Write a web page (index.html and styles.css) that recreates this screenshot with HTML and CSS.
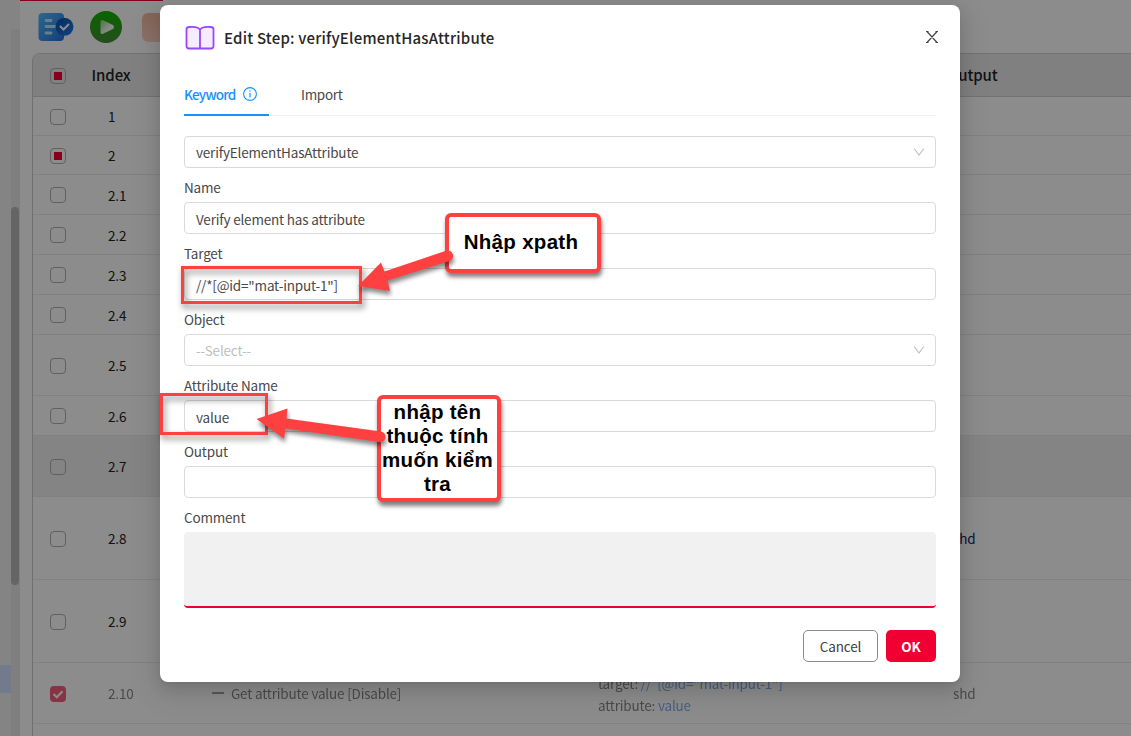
FILE: index.html
```html
<!DOCTYPE html>
<html lang="vi">
<head>
<meta charset="utf-8">
<title>Edit Step</title>
<link rel="stylesheet" href="styles.css">
</head>
<body>
<div class="app">
  <aside class="side"><div class="side-item"></div><div class="track"><div class="thumb"></div></div></aside>
  <main class="main">
    <div class="progress"></div>
    <div class="toolbar">
      <svg class="tool-check" width="36" height="30" viewBox="0 0 36 30">
        <defs>
          <linearGradient id="doc" x1="0" y1="0" x2="1" y2="1"><stop offset="0" stop-color="#50bcff"/><stop offset="1" stop-color="#2b6fe0"/></linearGradient>
          <linearGradient id="badge" x1="0" y1="0" x2="1" y2="1"><stop offset="0" stop-color="#0b4ba8"/><stop offset="1" stop-color="#1a80f0"/></linearGradient>
        </defs>
        <rect x=".5" y="1" width="25.5" height="28" rx="4" fill="url(#doc)"/>
        <path d="M8 8.500h5M8 14.500h9M8 21h5" stroke="#bfe6ff" stroke-width="2.800" stroke-linecap="round"/>
        <circle cx="26.500" cy="14.800" r="9" fill="url(#badge)"/>
        <path d="M22.500 14.500l3 3 5-5" fill="none" stroke="#fff" stroke-width="2" stroke-linecap="round"/>
      </svg>
      <svg class="tool-run" width="32" height="32" viewBox="0 0 32 32">
        <defs>
          <linearGradient id="run" x1="0" y1="0" x2="0" y2="1"><stop offset="0" stop-color="#11b800"/><stop offset="1" stop-color="#468c35"/></linearGradient>
          <linearGradient id="tri" x1="0" y1="0" x2="1" y2="1"><stop offset="0" stop-color="#8fd583"/><stop offset=".6" stop-color="#f4faf2"/></linearGradient>
        </defs>
        <circle cx="16" cy="16" r="16" fill="url(#run)"/>
        <path d="M10.500 11Q10.500 8 13.500 9.500L23 14Q25 16 23 18L13.500 22.500Q10.500 24 10.500 21Z" fill="url(#tri)"/>
      </svg>
      <div class="tool-peach"></div>
    </div>
    <div class="table">
      <div class="thead"><span class="cb mixed"></span><span>Index</span><span>Output</span></div>
      <div class="row h39"><span class="cb"></span><span>1</span></div>
      <div class="row h39"><span class="cb mixed"></span><span>2</span></div>
      <div class="row h40"><span class="cb"></span><span>2.1</span></div>
      <div class="row h40"><span class="cb"></span><span>2.2</span></div>
      <div class="row h40"><span class="cb"></span><span>2.3</span></div>
      <div class="row h40"><span class="cb"></span><span>2.4</span></div>
      <div class="row h61"><span class="cb"></span><span>2.5</span></div>
      <div class="row h40"><span class="cb"></span><span>2.6</span></div>
      <div class="row h61 hover"><span class="cb"></span><span>2.7</span></div>
      <div class="row h83"><span class="cb"></span><span>2.8</span><span></span><span></span><span class="var">shd</span></div>
      <div class="row h83"><span class="cb"></span><span>2.9</span></div>
      <div class="row h61 off"><span class="cb checked"><svg width="16" height="16" viewBox="0 0 16 16"><path d="M3.500 8l3.300 3.300 5.700-6" fill="none" stroke="#fff" stroke-width="2"/></svg></span><span>2.10</span><span class="step"><i class="dash"></i>Get attribute value [Disable]</span><span class="params">target: <b>//*[@id="mat-input-1"]</b><br>attribute: <b>value</b></span><span>shd</span></div>
      <div class="row tail"></div>
    </div>
  </main>
</div>
<div class="mask"></div>

<section class="dialog">
  <header class="head">
    <svg width="32" height="28" viewBox="0 0 32 28"><path d="M16 5.500C13.500 2.500 9 2.500 5 3Q2.500 3.200 2.500 5.500V22Q2.500 24.500 5 24.500H27Q29.500 24.500 29.500 22V5.500Q29.500 3.200 27 3C23 2.500 18.500 2.500 16 5.500ZM16 5.500V24.500" fill="#f5edff" stroke="#9747ff" stroke-width="1.800"/></svg>
    <h1>Edit Step: verifyElementHasAttribute</h1>
    <svg class="close" width="12" height="12" viewBox="0 0 12 12"><path d="M1 .5L11 11.500M11 .5L1 11.500M0 .5h2.500M9.500 .5H12M0 11.500h2.500M9.500 11.500H12" stroke="#444" stroke-width="1.200"/></svg>
  </header>
  <nav class="tabs">
    <span class="tab active"><span class="tab-name">Keyword</span>
      <svg width="14" height="14" viewBox="0 0 14 14"><circle cx="7" cy="7" r="6.400" fill="none" stroke="#1890ff" stroke-width="1.100"/><path d="M7 6v4.500M7 3.500v1.200" stroke="#1890ff" stroke-width="1.200"/></svg>
    </span>
    <span class="tab">Import</span>
  </nav>
  <div class="input select">verifyElementHasAttribute<svg width="12" height="10" viewBox="0 0 12 10"><path d="M1.200 1.500L6 8L10.800 1.500" fill="none" stroke="#bfbfbf" stroke-width="1.100"/></svg></div>
  <label>Name</label><div class="input">Verify element has attribute</div>
  <label>Target</label><div class="input">//*[@id="mat-input-1"]</div>
  <label>Object</label><div class="input select hint">--Select--<svg width="12" height="10" viewBox="0 0 12 10"><path d="M1.200 1.500L6 8L10.800 1.500" fill="none" stroke="#bfbfbf" stroke-width="1.100"/></svg></div>
  <label>Attribute Name</label><div class="input">value</div>
  <label>Output</label><div class="input"></div>
  <label>Comment</label><div class="area"></div>
  <footer class="foot"><button class="cancel">Cancel</button><button class="ok">OK</button></footer>
</section>

<div class="frame frame-target"></div>
<div class="frame frame-attr"></div>
<div class="note note-xpath">Nhập xpath</div>
<div class="note note-attr">nhập tên<br>thuộc tính<br>muốn kiểm<br>tra</div>
<svg class="arrows" width="1131" height="736" viewBox="0 0 1131 736">
  <g fill="#ff4040" stroke="none">
    <path d="M358 286L381 262.500L384.500 271.500L446 250.800A5.300 5.300 0 0 1 449.500 261L387.500 280.500L390 291Z"/>
    <path d="M256.500 419L287.500 408.500L286.500 418.500L381 431.500A5.300 5.300 0 0 1 379.500 442L285.500 428.500L284 438.500Z"/>
  </g>
</svg>
</body>
</html>
```
FILE: styles.css
```css
* { box-sizing: border-box; }
body { margin: 0; width: 1131px; height: 736px; overflow: hidden; position: relative; background: #fff; color: #222; font: 13.5px/22px "Noto Sans CJK SC", "Noto Sans", sans-serif; letter-spacing: -.18px; }
.app { display: flex; height: 736px; }
.side { width: 20px; flex: none; display: flex; background: #f0f0f0; }
.side-item { width: 11px; height: 28px; margin-top: 665px; background: #d2dfff; }
.track { width: 9px; margin-top: 29px; padding-top: 178px; background: #e8e8e8; }
.thumb { width: 8px; height: 378px; border-radius: 4px; background: #b9b9b9; }
.main { flex: 1; min-width: 0; padding-left: 12px; }
.progress { width: 143px; height: 1px; margin-left: -12px; background: #f00032; }
.toolbar { height: 52px; display: flex; align-items: center; padding-left: 6px; }
.tool-run { margin-left: 16px; }
.tool-peach { width: 30px; height: 29px; margin-left: 20px; border-radius: 6px; background: linear-gradient(#f5b9a0, #fcd2c0); }
.table { border-left: 1px solid #ccc; border-top: 1px solid #d0d0d0; border-radius: 8px 0 0 0; overflow: hidden; }
.thead { display: grid; grid-template-columns: 58.5px 855.5px auto; height: 43px; align-items: center; background: #eaeaea; border-bottom: 1px solid #d0d0d0; font-size: 15px; font-weight: 500; letter-spacing: -.1px; }
.thead .cb { margin-top: 1px; }
.row { display: grid; grid-template-columns: 75px 104px 386px 355px auto; align-items: center; border-bottom: 1px solid #ebebeb; }
.h39 { height: 39px; }
.h40 { height: 40px; }
.h61 { height: 61px; }
.h83 { height: 83px; }
.h39 .cb, .h61 .cb, .h83 .cb { margin-top: 2px; }
.tail { height: 13px; border-color: #d0d0d0; }
.hover { background: #f1f1f1; }
.cb { width: 16px; height: 16px; margin-left: 17px; display: grid; place-items: center; border: 1px solid #b0b0b0; border-radius: 4px; }
.mixed::before { content: ""; width: 8px; height: 8px; background: #f00032; }
.checked { border: 0; background: #f00032; }
.var { color: #1c1c70; }
.off > * { opacity: .55; }
.off > .cb { opacity: .62; }
.off .params { padding-top: 2px; }
.step { display: flex; align-items: center; }
.dash { width: 12px; height: 2px; margin-right: 7px; background: #555; }
.params b { font-weight: 400; color: #1668dc; }
.mask { position: absolute; inset: 0; background: rgba(0, 0, 0, .45); }
.dialog { position: absolute; left: 160px; top: 5px; width: 800px; height: 677px; padding: 19px 24px 20px; border-radius: 8px; background: #fff; color: #484848; box-shadow: 0 3px 6px -4px rgba(0,0,0,.12), 0 6px 16px rgba(0,0,0,.12), 0 9px 28px 8px rgba(0,0,0,.07); }
.head { height: 28px; display: flex; align-items: center; }
.head h1 { margin: 0 0 0 8px; font-size: 15px; line-height: 28px; font-weight: 500; color: #262626; letter-spacing: .2px; }
.close { margin: 0 -2px 2px auto; }
.tabs { height: 46px; margin: 18px 0 20px; display: flex; gap: 32px; border-bottom: 1px solid #f0f0f0; }
.tab { height: 46px; display: flex; align-items: center; padding-top: 3px; border-bottom: 2px solid transparent; letter-spacing: -.3px; }
.tab-name { width: 59px; letter-spacing: -.8px; }
.active { width: 85px; color: #1890ff; font-weight: 500; border-color: #1890ff; }
.tab svg { margin-top: 1px; }
.input { height: 32px; padding: 0 11px; line-height: 32px; border: 1px solid #d9d9d9; border-radius: 4px; }
.select { display: flex; align-items: center; justify-content: space-between; }
.select svg { margin-right: -1px; }
.hint { color: #bfbfbf; }
label { display: block; height: 34px; padding-top: 8px; line-height: 22px; }
.area { height: 76px; border-bottom: 2px solid #f00032; border-radius: 4px; background: #f1f1f1; }
.foot { display: flex; justify-content: flex-end; gap: 8px; margin-top: 22px; }
button { height: 32px; padding: 0; font: 13.5px/30px "Noto Sans CJK SC", "Noto Sans", sans-serif; letter-spacing: -.1px; border-radius: 5px; }
.cancel { width: 75px; border: 1px solid #8c8c8c; background: #fff; color: #404040; }
.ok { width: 50px; border: 0; background: #f00032; color: #fff; font-weight: 700; }
.frame { position: absolute; border: 3px solid #ff4040; filter: drop-shadow(2px 4px 3px rgba(0,0,0,.5)); }
.frame-target { left: 181px; top: 266px; width: 181px; height: 38px; }
.frame-attr { left: 160px; top: 393px; width: 108px; height: 42px; }
.note { position: absolute; border: 4px solid #ff4040; border-radius: 6px; background: #fff; color: #000; text-align: center; font: bold 20.5px/24px "Liberation Sans", Arial, sans-serif; letter-spacing: .3px; white-space: nowrap; box-shadow: 1px 4px 4px rgba(0,0,0,.5); }
.note-xpath { left: 445px; top: 213px; width: 156px; height: 60px; line-height: 49px; padding-right: 4px; }
.note-attr { left: 377px; top: 395px; width: 124px; height: 107px; padding: 1px 3px 0 0; }
.arrows { position: absolute; left: 0; top: 0; filter: drop-shadow(1px 4px 2px rgba(0,0,0,.45)); }
```
